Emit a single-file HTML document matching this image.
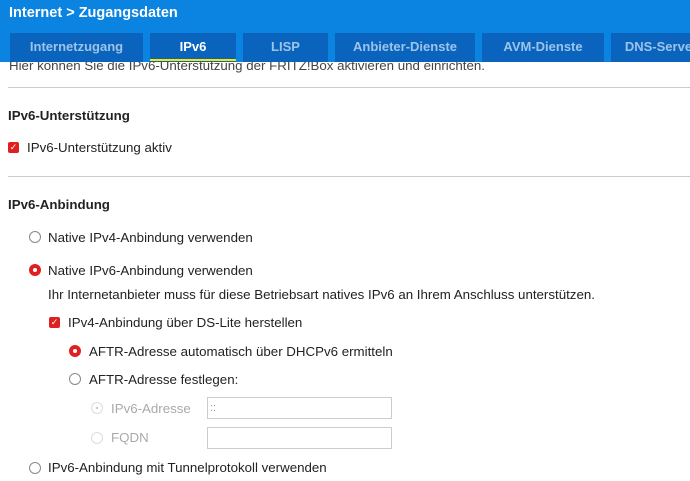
<!DOCTYPE html><html><head><style>
body{margin:0;width:690px;height:481px;overflow:hidden;background:#fff;font-family:"Liberation Sans",sans-serif;color:#222;position:relative}
.hdr{position:absolute;left:0;top:0;width:690px;height:62px;background:#0a84e0}
.title{position:absolute;left:9px;top:5px;color:#fff;font-size:14.5px;font-weight:bold}
.tab{position:absolute;top:33px;height:29px;background:#0a64bd;color:#9cc4ea;font-size:13px;font-weight:bold;text-align:center;line-height:28px}
.tab.act{color:#fff}
.tab.act:after{content:"";position:absolute;left:0;right:0;bottom:1px;height:2px;background:#ffe600}
.t{position:absolute;font-size:13.3px;white-space:nowrap}
.b{font-weight:bold}
.hr{position:absolute;left:8px;width:682px;height:1px;background:#ccc}
.cb{position:absolute;width:11px;height:11px;background:#e02020;border-radius:2px;color:#fff;font-size:9px;line-height:11px;text-align:center}
.rd{position:absolute;width:10px;height:10px;border:1px solid #888;border-radius:50%;background:#fff}
.rd.on{border:1px solid #e02020;background:#e02020}
.rd.on:after{content:"";position:absolute;left:3px;top:3px;width:4px;height:4px;border-radius:50%;background:#fff}
.rd.dis{border-color:#ddd}
.rd.dis.dot:after{content:"";position:absolute;left:4px;top:4px;width:2px;height:2px;border-radius:50%;background:#bbb}
.in{position:absolute;left:207px;width:185px;height:22px;border:1px solid #ccc;font-size:11px;color:#999;line-height:21px;padding-left:2px;box-sizing:border-box}
.g{color:#aaa}
</style></head><body>
<div class="t" style="left:9px;top:58px;color:#444">Hier können Sie die IPv6-Unterstützung der FRITZ!Box aktivieren und einrichten.</div>
<div class="hdr"><div class="title">Internet &gt; Zugangsdaten</div>
<div class="tab" style="left:10px;width:133px">Internetzugang</div>
<div class="tab act" style="left:150px;width:86px">IPv6</div>
<div class="tab" style="left:243px;width:85px">LISP</div>
<div class="tab" style="left:335px;width:140px">Anbieter-Dienste</div>
<div class="tab" style="left:482px;width:122px">AVM-Dienste</div>
<div class="tab" style="left:611px;width:100px">DNS-Server</div>
</div>
<div class="hr" style="top:87px"></div>
<div class="t b" style="left:8px;top:108px">IPv6-Unterstützung</div>
<div class="cb" style="left:8px;top:142px">✓</div>
<div class="t" style="left:27px;top:140px">IPv6-Unterstützung aktiv</div>
<div class="hr" style="top:176px"></div>
<div class="t b" style="left:8px;top:197px">IPv6-Anbindung</div>
<div class="rd" style="left:29px;top:231px"></div>
<div class="t" style="left:48px;top:230px">Native IPv4-Anbindung verwenden</div>
<div class="rd on" style="left:29px;top:264px"></div>
<div class="t" style="left:48px;top:263px">Native IPv6-Anbindung verwenden</div>
<div class="t" style="left:48px;top:287px">Ihr Internetanbieter muss für diese Betriebsart natives IPv6 an Ihrem Anschluss unterstützen.</div>
<div class="cb" style="left:49px;top:317px">✓</div>
<div class="t" style="left:68px;top:315px">IPv4-Anbindung über DS-Lite herstellen</div>
<div class="rd on" style="left:69px;top:345px"></div>
<div class="t" style="left:89px;top:344px">AFTR-Adresse automatisch über DHCPv6 ermitteln</div>
<div class="rd" style="left:69px;top:373px"></div>
<div class="t" style="left:89px;top:372px">AFTR-Adresse festlegen:</div>
<div class="rd dis dot" style="left:91px;top:402px"></div>
<div class="t g" style="left:111px;top:401px">IPv6-Adresse</div>
<div class="in" style="top:397px">::</div>
<div class="rd dis" style="left:91px;top:432px"></div>
<div class="t g" style="left:111px;top:430px">FQDN</div>
<div class="in" style="top:427px"></div>
<div class="rd" style="left:29px;top:462px"></div>
<div class="t" style="left:48px;top:460px">IPv6-Anbindung mit Tunnelprotokoll verwenden</div>
</body></html>
